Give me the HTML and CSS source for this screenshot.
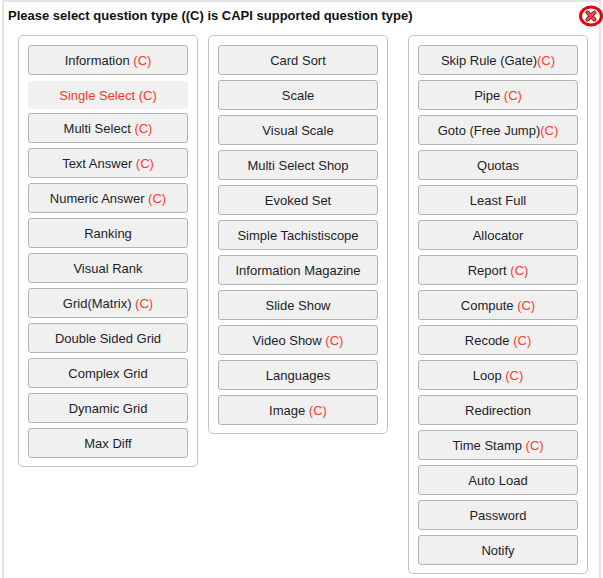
FILE: index.html
```html
<!doctype html>
<html lang="en">

<head>
  <meta charset="utf-8">
  <title>Question type</title>
  <link rel="stylesheet" href="styles.css">
</head>

<body>
  <section class="dialog">
    <h1 class="title">Please select question type ((C) is CAPI supported question type)</h1>
    <a class="close" href="#" title="Close">
      <svg width="24" height="22" viewBox="0 0 24 22">
        <ellipse cx="12" cy="11" rx="10.5" ry="9" fill="none" stroke="#e8000b" stroke-width="3"/>
        <path d="M8.5 7.5 L15.5 14.5 M15.5 7.5 L8.5 14.5" stroke="#9b1b1b" stroke-width="4" stroke-linecap="round"/>
        <path d="M8.5 7.5 L15.5 14.5 M15.5 7.5 L8.5 14.5" stroke="#f2555a" stroke-width="2" stroke-linecap="round"/>
      </svg>
    </a>

    <div class="columns">
      <div class="group first">
        <button>Information <span class="capi">(C)</span></button>
        <button class="hover">Single Select (C)</button>
        <button>Multi Select <span class="capi">(C)</span></button>
        <button>Text Answer <span class="capi">(C)</span></button>
        <button>Numeric Answer <span class="capi">(C)</span></button>
        <button>Ranking</button>
        <button>Visual Rank</button>
        <button>Grid(Matrix) <span class="capi">(C)</span></button>
        <button>Double Sided Grid</button>
        <button>Complex Grid</button>
        <button>Dynamic Grid</button>
        <button>Max Diff</button>
      </div>

      <div class="group second">
        <button>Card Sort</button>
        <button>Scale</button>
        <button>Visual Scale</button>
        <button>Multi Select Shop</button>
        <button>Evoked Set</button>
        <button>Simple Tachistiscope</button>
        <button>Information Magazine</button>
        <button>Slide Show</button>
        <button>Video Show <span class="capi">(C)</span></button>
        <button>Languages</button>
        <button>Image <span class="capi">(C)</span></button>
      </div>

      <div class="group">
        <button>Skip Rule (Gate)<span class="capi">(C)</span></button>
        <button>Pipe <span class="capi">(C)</span></button>
        <button>Goto (Free Jump)<span class="capi">(C)</span></button>
        <button>Quotas</button>
        <button>Least Full</button>
        <button>Allocator</button>
        <button>Report <span class="capi">(C)</span></button>
        <button>Compute <span class="capi">(C)</span></button>
        <button>Recode <span class="capi">(C)</span></button>
        <button>Loop <span class="capi">(C)</span></button>
        <button>Redirection</button>
        <button>Time Stamp <span class="capi">(C)</span></button>
        <button>Auto Load</button>
        <button>Password</button>
        <button>Notify</button>
      </div>
    </div>
  </section>
</body>

</html>
```

FILE: styles.css
```css
* {
  font-family: "Liberation Sans", Arial, Helvetica, sans-serif;
}

body {
  margin: 0;
  background-color: #fff;
  overflow: hidden;
}

.dialog {
  position: relative;
  box-sizing: border-box;
  width: 599px;
  height: 578px;
  margin-left: 2px;
  border: 2px solid #e4e4e4;
  border-bottom: none;
}

.title {
  margin: 0;
  padding: 6px 0 0 4px;
  font-size: 13px;
  line-height: 16px;
  color: #111;
}

.close {
  position: absolute;
  top: 3px;
  right: -4px;
  display: block;
  width: 24px;
  height: 22px;
}

.close svg {
  display: block;
}

.columns {
  display: flex;
  align-items: flex-start;
  margin-top: 11px;
  padding-left: 14px;
}

.group {
  display: flex;
  flex-direction: column;
  box-sizing: border-box;
  width: 180px;
  padding: 9px 9px 3px;
  border: 1px solid #c4c4c4;
  border-radius: 5px;
}

.group.first {
  margin-right: 10px;
}

.group.second {
  margin-right: 20px;
}

.group button {
  box-sizing: border-box;
  width: 160px;
  height: 30px;
  margin: 0 0 5px;
  padding: 0;
  border: 1px solid #b4b4b4;
  border-radius: 3px;
  background-color: #f0f0f0;
  font-size: 13px;
  color: #1e1e28;
  cursor: pointer;
}

.group button.hover {
  height: 28px;
  margin: 1px 0 4px;
  border: none;
  color: #f5382c;
}

.capi {
  color: #ff3b30;
}
```
